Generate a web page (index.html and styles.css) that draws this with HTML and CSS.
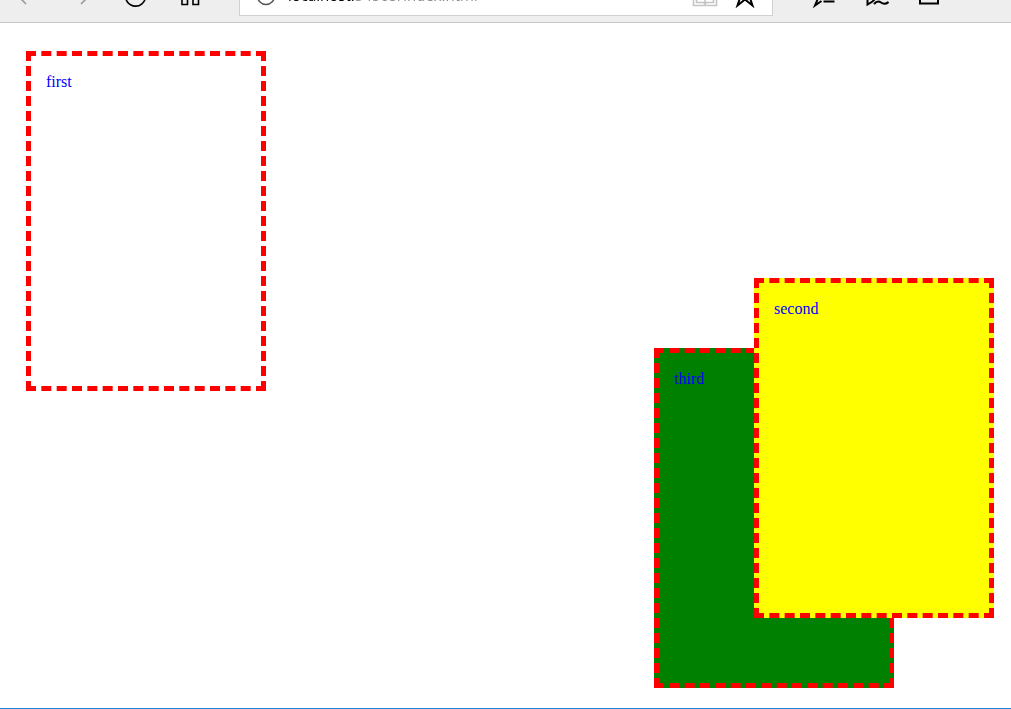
FILE: index.html
```html
<!DOCTYPE html>
<html lang="en">
<head>
<meta charset="utf-8">
<title>Positioned boxes</title>
<link rel="stylesheet" href="styles.css">
</head>
<body>
<header class="toolbar">
  <nav class="nav">
    <button class="tool muted" aria-label="Back"><svg viewBox="0 0 24 24"><path d="M11 20l-8-8 8-8"/></svg></button>
    <button class="tool muted" aria-label="Forward"><svg viewBox="0 0 24 24"><path d="M12 20l8-8-8-8"/></svg></button>
    <button class="tool" aria-label="Refresh"><svg viewBox="0 0 24 24"><path d="M20 5.500A10 10 0 1 0 22.500 11.500M20 1v5h-5"/></svg></button>
    <button class="tool" aria-label="Start"><svg viewBox="0 0 24 24"><path d="M5 3.500h5.500v6H5zM16 3.500h5.500v6H16zM5 14.500h5.500v6H5zM16 14.500h5.500v6H16z"/></svg></button>
  </nav>
  <div class="address">
    <button class="tool info" aria-label="Site information"><svg viewBox="0 0 24 24"><circle cx="12" cy="12" r="8.500"/><path d="M12 11v5M12 7v2"/></svg></button>
    <input class="url" type="text" aria-label="Address" value="localhost:54565/index.html">
    <button class="tool small book" aria-label="Reading view"><svg viewBox="0 0 26 24"><path d="M1.500 5v16.500h23V5M4.500 3v15.500h7l1.500 1.500 1.500-1.500h7V3h-6L13 5l-2.500-2zM13 5v15"/></svg></button>
    <button class="tool small star" aria-label="Favorite"><svg viewBox="0 0 24 24"><path d="M12 3l2.500 6.500h7L17 14l2.500 7.500-7.500-6-7.500 6L7 14 2.500 9.500h7z"/></svg></button>
  </div>
  <div class="actions">
    <button class="tool" aria-label="Favorites"><svg viewBox="0 0 24 24"><path d="M12 2l2 6h7l-6 4M10 8H3l4 4-4 9.500 6.500-4.500M12 12.500h10M11.500 17.500h11"/></svg></button>
    <button class="tool" aria-label="Add notes"><svg viewBox="0 0 24 24"><path d="M17 2l3 3L7.500 17.500l-5 3V14zM9 20c3-3.500 5-3 7-1.500s4.500 2 7.500-.5"/></svg></button>
    <button class="tool" aria-label="Share"><svg viewBox="0 0 24 24"><path d="M8 7H2v12.500h18V13M8 13c1-5 5-7 12-7M16 2l4 4-4 4"/></svg></button>
    <button class="tool more" aria-label="More"><svg viewBox="0 0 24 24"><path d="M4 12h1M12 12h1M20 12h1"/></svg></button>
  </div>
</header>
<main class="page">
  <div class="box first">first</div>
  <div class="box second">second</div>
  <div class="box third">third</div>
</main>
</body>
</html>
```
FILE: styles.css
```css
* {
  box-sizing: border-box;
}

body {
  margin: 0;
  min-height: 100vh;
  display: flex;
  flex-direction: column;
  overflow: hidden;
  background: #fff;
  border-bottom: 1px solid #1883d7;
  font: 16px "Liberation Serif", "Times New Roman", serif;
}

/* The bar starts above the visible window area. */
.toolbar {
  display: flex;
  margin-top: -24px;
  padding-bottom: 6px;
  background: #eee;
  border-bottom: 1px solid #c8c8c8;
}

.nav,
.actions {
  display: flex;
}

.nav {
  margin-right: 23px;
}

.actions {
  margin-left: 24px;
}

.tool {
  display: flex;
  align-items: center;
  justify-content: center;
  flex: none;
  width: 54px;
  height: 40px;
  padding: 0;
  border: 0;
  background: none;
  color: #000;
}

.actions .tool {
  width: 53px;
}

.actions .more {
  width: 55px;
}

.tool svg {
  width: 24px;
  height: 24px;
  fill: none;
  stroke: currentColor;
  stroke-width: 1.6;
}

.actions svg,
.star svg {
  stroke-width: 2;
}

.muted {
  color: #999;
}

.address {
  display: flex;
  align-items: center;
  flex: 1;
  min-width: 0;
  height: 40px;
  padding-right: 7px;
  background: #fff;
  border: 1px solid #d0d0d0;
}

.address .info {
  width: 52px;
  margin-right: -4px;
  color: #555;
}

.address .small {
  width: 40px;
}

.address .book {
  color: #c4c4c4;
}

.book svg {
  width: 26px;
}

.url {
  flex: 1;
  min-width: 0;
  height: 24px;
  padding: 0 0 2px;
  border: 0;
  outline: 0;
  background: linear-gradient(90deg, #000 66px, #888 66px);
  background-clip: text;
  color: transparent;
  font: 15px "Open Sans", sans-serif;
}

.page {
  position: relative;
  flex: 1;
  padding: 28px 26px;
}

.box {
  width: 240px;
  height: 340px;
  padding: 15px;
  border: 5px dashed #f00;
  color: #00f;
  line-height: 22px;
}

.second,
.third {
  position: absolute;
}

.second {
  right: 17px;
  bottom: 90px;
  z-index: 2;
  background: #ff0;
}

.third {
  right: 117px;
  bottom: 20px;
  z-index: 1;
  background: #008000;
}
```
